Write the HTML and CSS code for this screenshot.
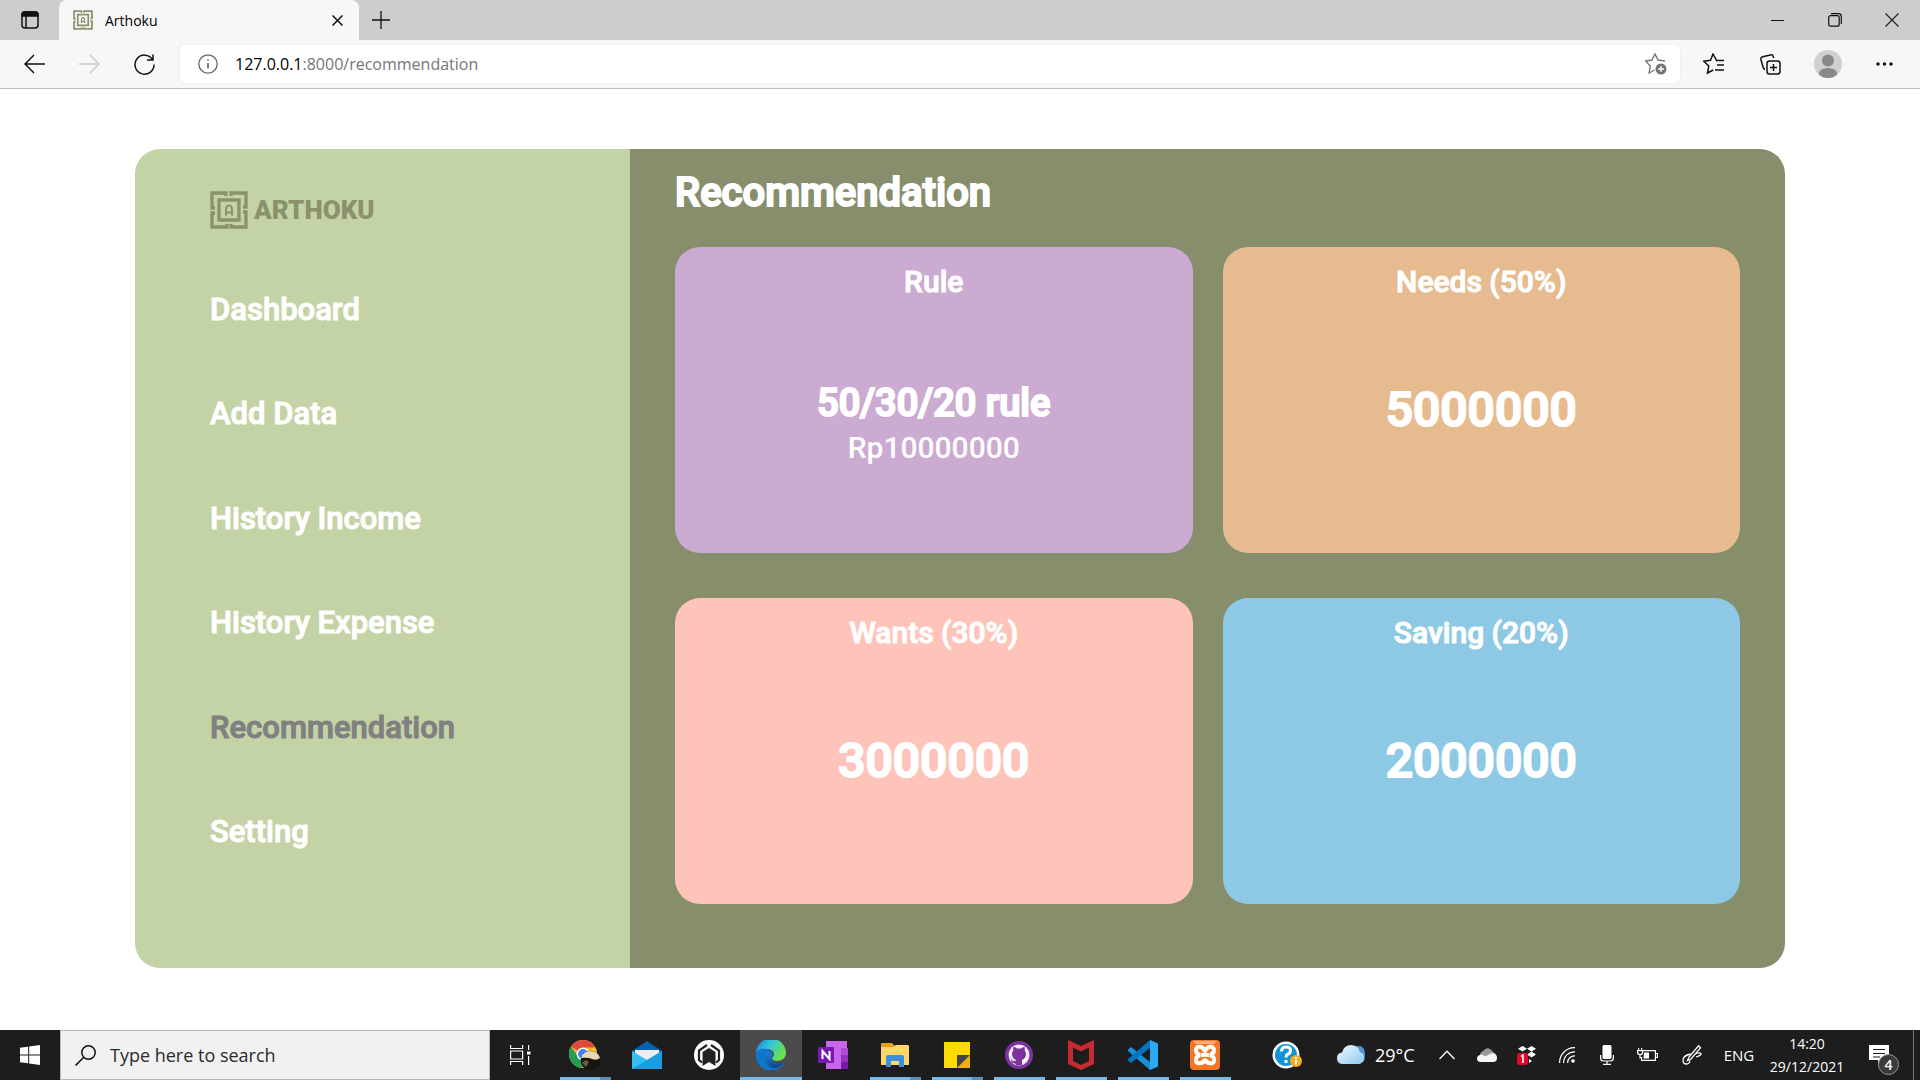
FILE: index.html
```html
<!DOCTYPE html>
<html lang="en">
<head>
<meta charset="utf-8">
<meta name="viewport" content="width=device-width, initial-scale=1">
<title>Arthoku</title>
<link rel="stylesheet" href="styles.css">
</head>
<body>
<svg class="defs" aria-hidden="true">
  <symbol id="mark" viewBox="0 0 38 38">
    <g fill="none" stroke="currentColor" stroke-width="3.300">
      <path d="M16 5V2H2v15h3M21 5V2h15v14h-3M5 22H2v14h15v-3M33 21h3v15H21v-3"/>
      <path d="M9 9h20v20H9z"/>
      <path d="M16 24.500v-5.500q0-4.500 3-4.500t3 4.500v5.500M16 21.500h6" stroke-width="2.200"/>
    </g>
  </symbol>
</svg>

<header class="browser">
  <div class="tabstrip">
    <button class="icon-btn tab-actions" aria-label="Tab actions"><svg width="18" height="18" viewBox="0 0 18 18" fill="none" stroke="#111" stroke-width="1.500"><rect x="1" y="1" width="16" height="16" rx="3"/><path d="M1 3.500q0-2.500 2.500-2.500h11q2.500 0 2.500 2.500V5H1z" fill="#111"/><path d="M5 5v12"/></svg></button>
    <div class="tab">
      <svg class="favicon" width="20" height="20"><use href="#mark"/></svg>
      <span class="tab-title">Arthoku</span>
      <button class="icon-btn tab-close" aria-label="Close tab"><svg width="11" height="11" viewBox="0 0 11 11" stroke="#111" stroke-width="1.500"><path d="M0.500 0.500l10 10M10.500 0.500l-10 10"/></svg></button>
    </div>
    <button class="icon-btn new-tab" aria-label="New tab"><svg width="18" height="18" viewBox="0 0 18 18" stroke="#111" stroke-width="1.300"><path d="M9 0v18M0 9h18"/></svg></button>
    <div class="window-controls">
      <button class="icon-btn" aria-label="Minimize"><svg width="14" height="14" viewBox="0 0 14 14" stroke="#111"><path d="M0 7.500h13"/></svg></button>
      <button class="icon-btn" aria-label="Restore"><svg width="14" height="14" viewBox="0 0 14 14" fill="none" stroke="#111" stroke-width="1.200"><rect x="0.700" y="2.700" width="10.500" height="10.500" rx="2"/><path d="M3 .7h7.500q2.800 0 2.800 2.800V11"/></svg></button>
      <button class="icon-btn" aria-label="Close"><svg width="14" height="14" viewBox="0 0 14 14" stroke="#222" stroke-width="1.200"><path d="M.5.5l13 13M13.500.5l-13 13"/></svg></button>
    </div>
  </div>
  <div class="toolbar">
    <button class="icon-btn nav-btn" aria-label="Back"><svg width="21" height="20" viewBox="0 0 21 20" fill="none" stroke="#111" stroke-width="1.500"><path d="M10 1L1 10l9 9M1 10h20"/></svg></button>
    <button class="icon-btn nav-btn" aria-label="Forward"><svg width="21" height="20" viewBox="0 0 21 20" fill="none" stroke="#ccc" stroke-width="1.500"><path d="M11 1l9 9-9 9M20 10H0"/></svg></button>
    <button class="icon-btn nav-btn" aria-label="Reload"><svg width="21" height="21" viewBox="0 0 21 21" fill="none" stroke="#111" stroke-width="1.500"><path d="M18.500 5.500A9.500 9.500 0 1 0 20 10.500M19 .5V6h-6"/></svg></button>
    <div class="address">
      <svg width="20" height="20" viewBox="0 0 20 20" fill="none" stroke="#666" stroke-width="1.300"><circle cx="10" cy="10" r="9.200"/><path d="M10 9v5.500M10 5.200v1.600" stroke-width="1.600"/></svg>
      <div class="url">127.0.0.1<span class="url-rest">:8000/recommendation</span></div>
      <button class="icon-btn" aria-label="Add to favorites"><svg width="22" height="22" viewBox="0 0 22 22"><path d="M20 8l-7-1-3-6-3 6-6.500 1 4.800 5-1.200 7 5.500-3" fill="none" stroke="#777" stroke-width="1.400"/><circle cx="16" cy="16" r="5.500" fill="#737373"/><path d="M16 13v6M13 16h6" stroke="#fff" stroke-width="1.300"/></svg></button>
    </div>
    <div class="tools">
      <button class="icon-btn" aria-label="Favorites"><svg width="22" height="22" viewBox="0 0 22 22" fill="none" stroke="#111" stroke-width="1.500"><path d="M13.500 7.300L10 1 7.500 7.200.8 8.200l5 4.800-1.300 7 5.700-3M13 7.500h8M14 12h7M12 17h9"/></svg></button>
      <button class="icon-btn" aria-label="Collections"><svg width="21" height="21" viewBox="0 0 21 21" fill="none" stroke="#111" stroke-width="1.500"><path d="M5 15.500Q3.500 15 3 13L.9 5.500Q.5 3.300 2.700 2.700L10.500.9q2.300-.4 2.800 1.700l.4 1.400"/><rect x="7" y="7" width="13" height="13" rx="2.500"/><path d="M13.500 10v7M10 13.500h7"/></svg></button>
      <button class="icon-btn" aria-label="Profile"><svg width="28" height="28" viewBox="0 0 28 28"><circle cx="14" cy="14" r="14" fill="#d2d0ce"/><circle cx="14" cy="10.500" r="6" fill="#8a8886"/><path d="M4.500 24.300Q6 18 14 18t9.500 6.300A14 14 0 0 1 4.500 24.300z" fill="#8a8886"/></svg></button>
      <button class="icon-btn" aria-label="Settings and more"><svg width="17" height="4" viewBox="0 0 17 4" fill="#111"><circle cx="2" cy="2" r="1.700"/><circle cx="8.500" cy="2" r="1.700"/><circle cx="15" cy="2" r="1.700"/></svg></button>
    </div>
  </div>
</header>

<main class="page">
  <div class="panel">
    <aside class="sidebar">
      <a class="brand" href="#"><svg width="38" height="38"><use href="#mark"/></svg><span>ARTHOKU</span></a>
      <nav class="menu">
        <a href="#">Dashboard</a>
        <a href="#">Add Data</a>
        <a href="#">History Income</a>
        <a href="#">History Expense</a>
        <a class="current" href="#" aria-current="page">Recommendation</a>
        <a href="#">Setting</a>
      </nav>
    </aside>
    <section class="content">
      <h1>Recommendation</h1>
      <div class="cards">
        <article class="card rule"><h2>Rule</h2><div class="card-body"><p class="rule-name">50/30/20 rule</p><p class="rule-total">Rp10000000</p></div></article>
        <article class="card needs"><h2>Needs (50%)</h2><div class="card-body"><p class="amount">5000000</p></div></article>
        <article class="card wants"><h2>Wants (30%)</h2><div class="card-body"><p class="amount">3000000</p></div></article>
        <article class="card saving"><h2>Saving (20%)</h2><div class="card-body"><p class="amount">2000000</p></div></article>
      </div>
    </section>
  </div>
</main>

<footer class="taskbar">
  <button class="task start" aria-label="Start"><svg width="20" height="20" viewBox="0 0 20 20" fill="#fff"><path d="M0 2.800l8.200-1.100v7.800H0zM9.200 1.500L20 0v9.500H9.200zM0 10.500h8.200v7.800L0 17.200zM9.200 10.500H20V20L9.200 18.500z"/></svg></button>
  <label class="search"><svg width="21" height="21" viewBox="0 0 21 21" fill="none" stroke="#111" stroke-width="1.500"><circle cx="13.500" cy="7.500" r="6.700"/><path d="M8.800 12.200L.6 20.400"/></svg><input type="text" placeholder="Type here to search" aria-label="Type here to search"></label>
  <button class="task view" aria-label="Task view"><svg width="21" height="20" viewBox="0 0 21 20" fill="none" stroke="#fff" stroke-width="1.200"><path d="M.6 0v3.500h12V0M.6 20v-3.500h12V20M.6 6h12v8H.6zM18.600 0v5M18.600 11v9"/><path d="M17 6.500h3.500v3H17z" fill="#fff" stroke="none"/></svg></button>
  <div class="apps">
    <button class="task app running many" aria-label="Chrome"><svg width="32" height="32" viewBox="0 0 32 32"><circle cx="14" cy="15" r="14" fill="#fbc02d"/><path d="M14 15L2 7.800A14 14 0 0 1 26.500 8.500H14z" fill="#e0493e"/><path d="M2 7.800A14 14 0 0 0 13 29l4.500-9L9 17z" fill="#259b54"/><circle cx="14" cy="15" r="6.500" fill="#fff"/><circle cx="14" cy="15" r="5" fill="#4285f4"/><circle cx="21.500" cy="21.500" r="9.800" fill="#181412"/><path d="M12 19a10 10 0 0 1 19 0q-4 3-8 1t-11-1z" fill="#e7d6b8"/><path d="M13 24q4-5 7-1l-3 5z" fill="#70583b"/></svg></button>
    <button class="task app" aria-label="Mail"><svg width="30" height="30" viewBox="0 0 30 30"><path d="M0 11L15 1l15 10v4H0z" fill="#0960ae"/><path d="M3 10h24v10H3z" fill="#eee"/><path d="M0 11l15 9 15-9v18H0z" fill="#36bff2"/><path d="M0 29l15-9 15-9v18z" fill="#1b9de2"/></svg></button>
    <button class="task app" aria-label="Assistant"><svg width="30" height="30" viewBox="0 0 30 30"><circle cx="15" cy="15" r="15" fill="#fff"/><path d="M8.500 26V12L15 8l6.500 4v14L15 22z" fill="#222"/><path d="M13 5L5 10.500V20l3 2.500M17 5l8 5.500V20l-3 2.500" fill="none" stroke="#222" stroke-width="2.200"/></svg></button>
    <button class="task app running active" aria-label="Edge"><svg width="30" height="30" viewBox="0 0 30 30"><defs><linearGradient id="edgeTop" x2="1" y2="0.400"><stop stop-color="#1685d8"/><stop offset=".5" stop-color="#32c5dc"/><stop offset="1" stop-color="#69e34b"/></linearGradient><linearGradient id="edgeLow" y2="1" x2=".5"><stop stop-color="#1683d8"/><stop offset="1" stop-color="#0c4790"/></linearGradient></defs><path d="M0 14A15 15 0 0 1 30 13c0 5-4 8-9 8-4 0-6-2-4-4 3-4-1-8-6-8C6 9 1 11 0 14z" fill="url(#edgeTop)"/><path d="M0 14c1-5 6-6 10-5 6 1 8 5 6 8-1 2 0 7 6 7 3 0 5-1 6-1A15 15 0 0 1 0 14z" fill="#1176ca"/><path d="M14 12c-5 1-7 9 0 15 5 3 11 0 14-5-5 3-14 2-13-4z" fill="url(#edgeLow)"/></svg></button>
    <button class="task app" aria-label="OneNote"><svg width="30" height="28" viewBox="0 0 30 28"><path d="M8 0h21v28H8z" fill="#ca64ea"/><path d="M23 7h7v7h-7z" fill="#ae4bd5"/><path d="M23 14h7v7h-7z" fill="#9332bf"/><path d="M23 21h7v7h-7z" fill="#7719aa"/><rect y="6" width="16" height="16" rx="1" fill="#7719aa"/><path d="M4.500 18v-8l7 8v-8" fill="none" stroke="#fff" stroke-width="2"/></svg></button>
    <button class="task app running many" aria-label="File Explorer"><svg width="28" height="24" viewBox="0 0 28 24"><path d="M0 1q0-1 1-1h10l3 3h13q1 0 1 1v18H0z" fill="#e3a11a"/><path d="M0 4h12l3-2h12l1 1v19H0z" fill="#ffd667"/><path d="M5 24V14q0-2 2-2h14q2 0 2 2v10h-5v-6h-8v6z" fill="#3b91dd"/></svg></button>
    <button class="task app running many" aria-label="Sticky Notes"><svg width="26" height="26" viewBox="0 0 26 26"><path d="M0 0h26v26H0z" fill="#fedb00"/><path d="M13 26l13-13v13z" fill="#f3ae10"/><path d="M13 26V13h13z" fill="#434343"/></svg></button>
    <button class="task app running" aria-label="GitHub Desktop"><svg width="28" height="28" viewBox="0 0 28 28"><circle cx="14" cy="14" r="14" fill="#7d32a0"/><circle cx="14" cy="14" r="10.500" fill="#f4eef7"/><path d="M11 24v-4q-5 0-5.500-4M11 24v-5q-4-2-4-6 0-2 1.300-3.500Q8 7 8.500 6q2 0 3.500 1.400h4Q18 6 19.500 6q.5 1 .2 3.500Q21 11 21 13q0 4-4 6v5z" fill="#7d32a0"/><path d="M10.500 21.500q-3 .5-4-2" stroke="#7d32a0" stroke-width="1.400" fill="none"/></svg></button>
    <button class="task app running" aria-label="McAfee"><svg width="26" height="30" viewBox="0 0 26 30"><path d="M0 0l13 6 13-6v24l-13 6-13-6z" fill="#c52b31"/><path d="M5 7.500l8 4 8-4V21l-8 4-8-4z" fill="#1d1d1d"/></svg></button>
    <button class="task app running" aria-label="Visual Studio Code"><svg width="30" height="30" viewBox="0 0 30 30"><path d="M0 9.500L3 7l19 15v8L0 11z" fill="#1490df"/><path d="M0 20.500L3 23 22 8V0L0 19z" fill="#0873bd"/><path d="M22 0l8 3.500v23L22 30z" fill="#2aaaf2"/></svg></button>
    <button class="task app running" aria-label="XAMPP"><svg width="30" height="30" viewBox="0 0 30 30"><rect width="30" height="30" rx="4" fill="#f47623"/><path d="M3 1h24l-3 3H6z" fill="#ffad79"/><path d="M15 11C12 5 6 6 6 10q0 4 4 5-4 1-4 5 0 4 4 3 4 0 5-4 1 4 5 4 4 1 4-3 0-4-4-5 4-1 4-5c0-4-6-5-9 1z" fill="none" stroke="#fff" stroke-width="4"/><path d="M11 15h8" stroke="#fff" stroke-width="4"/></svg></button>
  </div>
  <div class="tray">
    <button class="task help" aria-label="Help"><svg width="30" height="28" viewBox="0 0 30 28"><circle cx="14" cy="14" r="13.500" fill="#fff"/><circle cx="14" cy="14" r="11" fill="#1193d5"/><path d="M9.500 10.500q0-4.500 4.500-4.500t4.500 3.500q0 2.500-2.500 3.700-2 1-2 3.300M14 19v3" fill="none" stroke="#fff" stroke-width="3"/><circle cx="24" cy="20" r="6" fill="#f4ae25"/><path d="M24 19v4.500M24 16v1.700" stroke="#fff" stroke-width="2"/></svg></button>
    <button class="task weather"><svg width="28" height="20" viewBox="0 0 28 20"><defs><linearGradient id="sky" x2="1" y2="1"><stop stop-color="#eef8ff"/><stop offset="1" stop-color="#91c8f3"/></linearGradient></defs><path d="M17 2q7-3 10 2 2 6 0 12l-5 3z" fill="#4f95dc"/><path d="M6 19q-6 0-6-6 0-5 5-5.500Q7 0 14 0t9 7q4 1 4 6t-5 6z" fill="url(#sky)"/></svg><span>29°C</span></button>
    <button class="task tray-cell" aria-label="Show hidden icons"><svg width="16" height="10" viewBox="0 0 16 10" fill="none" stroke="#fff" stroke-width="1.300"><path d="M.5 9L8 1.200 15.500 9"/></svg></button>
    <button class="task tray-cell" aria-label="OneDrive"><svg width="20" height="14" viewBox="0 0 20 14"><path d="M3 8Q3 4 6 3q5-6 10 1 3 1 4 5l-8 2z" fill="#999"/><path d="M3 14q-3-.5-3-3.500T4 6.500q2 0 4 2l7-3.500q5 1 5 5t-4 4z" fill="#f6f6f6"/></svg></button>
    <button class="task tray-cell" aria-label="Dropbox"><svg width="20" height="20" viewBox="0 0 20 20"><path d="M5.500 1L10 3.700 5.500 6.500 1 3.700zM14.500 1L19 3.700l-4.500 2.800L10 3.700zM14.500 6.500L19 9.500l-4.500 3-4.500-3zM12 14l3 2-3 2z" fill="#fff"/><rect y="8" width="11" height="12" rx="2" fill="#db0928"/><path d="M4 11.500l2-1.500v8" fill="none" stroke="#fff" stroke-width="1.500"/></svg></button>
    <button class="task tray-cell" aria-label="Network"><svg width="16" height="16" viewBox="0 0 16 16" fill="none" stroke="#fff" stroke-width="1.200"><path d="M.6 16A15 15 0 0 1 16 .6M4.600 16A11 11 0 0 1 16 4.800M8.600 16A7 7 0 0 1 16 8.800"/><circle cx="14" cy="14" r="1.200" fill="#fff"/></svg></button>
    <button class="task tray-cell" aria-label="Microphone"><svg width="14" height="20" viewBox="0 0 14 20" fill="#fff"><rect x="2.500" width="9" height="14" rx="1.500"/><path d="M.6 10v3q0 3 3 3h6.800q3 0 3-3v-3M7 16v3.400M3 19.400h8" fill="none" stroke="#fff" stroke-width="1.200"/></svg></button>
    <button class="task tray-cell" aria-label="Battery"><svg width="21" height="14" viewBox="0 0 21 14" fill="none" stroke="#fff" stroke-width="1.200"><path d="M6 2.600h12.400v9.800H4.600V9M18.400 5.500h2v4h-2M1.600 0v2.500M4.600 0v2.500M.6 2.600h5v2q0 2-2.500 2t-2.500-2zM3 6.500V10h2"/><path d="M7 4.500h5v6H6.500z" fill="#fff" stroke="none"/></svg></button>
    <button class="task pen" aria-label="Pen"><svg width="20" height="20" viewBox="0 0 20 20" fill="none" stroke="#fff" stroke-width="1.300"><path d="M16.500.8l2 2L9 14l-3.500 1.500L7 12z"/><path d="M8.500 9Q1 10.500 1 15.500 1 19 4.500 19q3 0 3.500-3.500M14 8.500q5-1.500 5 .5 0 1.500-5 3"/></svg></button>
    <button class="task lang">ENG</button>
    <button class="task clock"><span>14:20</span><span>29/12/2021</span></button>
    <button class="task notify" aria-label="4 notifications"><svg width="20" height="20" viewBox="0 0 20 20"><path d="M0 0h20v15h-7l-4 4v-4H0z" fill="#fff"/><path d="M4 4.500h12M4 8.500h12M4 12h7" stroke="#1d1d1d" stroke-width="1.200"/></svg><span class="badge">4</span></button>
    <button class="show-desktop" aria-label="Show desktop"></button>
  </div>
</footer>
</body>
</html>
```
FILE: styles.css
```css
* { box-sizing: border-box; }
body {
  margin: 0;
  min-height: 100vh;
  display: flex;
  flex-direction: column;
  background: #fff;
  font-family: Roboto, "Liberation Sans", sans-serif;
}
button, input { font: inherit; color: inherit; border: 0; padding: 0; background: none; }
a { color: inherit; text-decoration: none; }
h1, h2, p { margin: 0; }
svg { display: block; flex: none; }
.defs { position: absolute; width: 0; height: 0; }

/* Browser chrome */
.browser, .taskbar { font-family: "Open Sans", "Noto Sans", sans-serif; }
.browser { background: #f7f7f7; border-bottom: 1px solid #c0c0c0; }
.icon-btn { display: flex; align-items: center; justify-content: center; }
.tabstrip { display: flex; height: 40px; background: #cdcdcd; }
.tab-actions { width: 59px; }
.tab {
  display: flex;
  align-items: center;
  width: 300px;
  padding: 0 16px 0 14px;
  background: #f7f7f7;
  border-radius: 8px 8px 0 0;
}
.favicon { color: #8b916c; }
.tab-title { flex: 1; margin-left: 12px; font-size: 14px; }
.new-tab { width: 43px; }
.window-controls { display: flex; margin-left: auto; }
.window-controls .icon-btn { width: 57px; }
.toolbar { display: flex; align-items: center; height: 48px; padding-left: 7px; }
.nav-btn { width: 55px; height: 40px; }
.address {
  display: flex;
  align-items: center;
  flex: 1;
  height: 38px;
  margin-left: 8px;
  padding: 0 13px 0 18px;
  background: #fff;
  border-radius: 5px;
  box-shadow: 0 0 3px rgba(0, 0, 0, 0.08);
}
.url { flex: 1; margin-left: 17px; font-size: 16px; }
.url-rest { color: #767676; }
.tools { display: flex; padding-left: 5px; padding-right: 7px; }
.tools .icon-btn { width: 57px; height: 40px; }

/* Page */
.page { flex: 1; padding: 60px 7%; }
.panel {
  display: flex;
  max-width: 1650px;
  min-height: 819px;
  margin: 0 auto;
  border-radius: 25px;
  overflow: hidden;
  color: #fff;
}
.sidebar {
  display: flex;
  flex-direction: column;
  width: 30%;
  padding: 40px 75px 112px;
  background: #c4d3a5;
}
.brand { display: flex; align-items: center; gap: 6px; height: 42px; color: #8b916c; }
.brand span { font-size: 26px; font-weight: 900; }
.menu {
  display: flex;
  flex: 1;
  flex-direction: column;
  justify-content: space-between;
  margin-top: 55px;
  font-size: 31px;
  line-height: 48px;
}
/* Medium weight thickened by an outline, for a dense heading face */
.menu, h1, h2, .rule-name, .amount {
  font-weight: 500;
  -webkit-text-stroke: 1px currentColor;
}
.current { color: #808080; }
.content { flex: 1; padding: 19px 45px 64px; background: #868e6c; }
h1 { font-size: 40px; line-height: 50px; }
.cards { display: grid; grid-template-columns: 1fr 1fr; gap: 45px 30px; margin-top: 29px; }
.card {
  display: flex;
  flex-direction: column;
  min-height: 306px;
  padding: 16px 24px;
  border-radius: 25px;
  text-align: center;
}
.rule { background: #cbabd1; }
.needs { background: #e6bb90; }
.wants { background: #fec4b9; }
.saving { background: #8dc8e5; }
h2 { font-size: 30px; line-height: 38px; }
.card-body { padding-top: 78px; }
.rule-name { font-size: 38px; line-height: 48px; }
.rule-total { font-size: 30px; font-weight: 500; line-height: 42px; }
.amount { font-size: 48px; line-height: 62px; }
h1, .rule-name, .amount { -webkit-text-stroke-width: 2px; }

/* Taskbar */
.taskbar { display: flex; height: 50px; background: #1d1d1d; color: #fff; }
.task { display: flex; align-items: center; justify-content: center; }
.start { width: 60px; }
.search {
  display: flex;
  align-items: center;
  gap: 14px;
  width: 430px;
  padding-left: 14px;
  background: #f1f1f1;
  border: 1px solid #b8b8b8;
}
.search input { flex: 1; min-width: 0; font-size: 18px; outline: 0; }
.search input::placeholder { color: #2b2b2b; opacity: 1; }
.view { width: 60px; margin-right: 4px; }
.apps { display: flex; }
.app { width: 62px; padding: 0 5px; }
.running { background: linear-gradient(#76b9ed, #76b9ed) center bottom / 51px 3px no-repeat; }
.many { background-image: linear-gradient(90deg, #76b9ed 40px, #5b90bc 40px); }
.active { background-color: #4b4b4b; background-size: 100% 3px; }
.tray { display: flex; margin-left: auto; font-size: 15px; }
.help { width: 50px; margin-right: 15px; }
.weather { width: 100px; gap: 10px; justify-content: flex-start; padding-left: 10px; font-size: 18px; }
.tray-cell { width: 40px; }
.pen { width: 50px; }
.lang { width: 44px; }
.clock { flex-direction: column; width: 92px; font-size: 14px; line-height: 23px; }
.notify { position: relative; width: 60px; }
.notify svg { margin-right: 8px; }
.badge {
  position: absolute;
  right: 14px;
  bottom: 5px;
  width: 21px;
  height: 21px;
  border: 1px solid #999;
  border-radius: 50%;
  background: #3b3b3b;
  font-size: 14px;
  font-weight: 600;
  line-height: 19px;
}
.show-desktop { width: 7px; border-left: 1px solid #777; }
```
